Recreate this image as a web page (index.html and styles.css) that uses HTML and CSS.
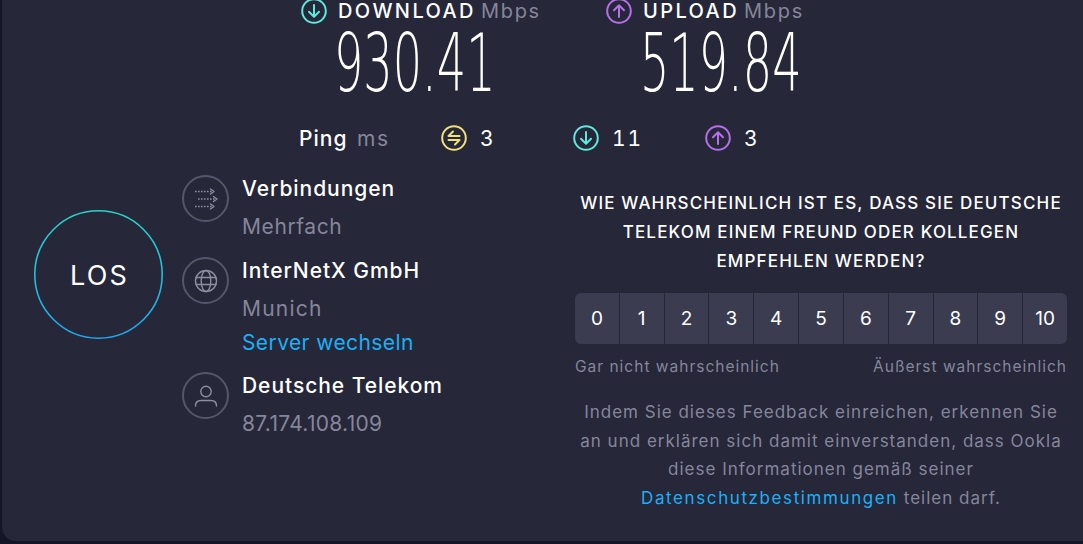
FILE: index.html
```html
<!DOCTYPE html>
<html lang="de">
<head>
<meta charset="utf-8">
<title>Speedtest</title>
<link rel="stylesheet" href="styles.css">
</head>
<body>
<main class="panel">
  <section class="speeds">
    <div class="speed speed-down">
      <div class="speed-label">
        <svg class="icon-lg" viewBox="0 0 26 26"><circle cx="13" cy="13" r="11.8" class="ring-cyan"/><path d="M13 7v11.5M8 13.8l5 5 5-5" class="stroke-cyan"/></svg>
        <span class="label-name">DOWNLOAD</span><span class="label-unit">Mbps</span>
      </div>
      <div class="speed-value"><span>930.41</span></div>
    </div>
    <div class="speed speed-up">
      <div class="speed-label">
        <svg class="icon-lg" viewBox="0 0 26 26"><circle cx="13" cy="13" r="11.8" class="ring-purple"/><path d="M13 19V7.500M8 12.200l5-5 5 5" class="stroke-purple"/></svg>
        <span class="label-name">UPLOAD</span><span class="label-unit">Mbps</span>
      </div>
      <div class="speed-value"><span>519.84</span></div>
    </div>
  </section>

  <section class="ping">
    <span class="ping-name">Ping</span><span class="ping-unit">ms</span>
    <div class="ping-item ping-idle">
      <svg class="icon-lg" viewBox="0 0 26 26"><circle cx="13" cy="13" r="11.8" class="ring-yellow"/><path d="M18.500 11H7.500L12 6.500M7.500 15H18.500L14 19.500" class="stroke-yellow"/></svg>
      <span>3</span>
    </div>
    <div class="ping-item ping-down">
      <svg class="icon-lg" viewBox="0 0 26 26"><circle cx="13" cy="13" r="11.8" class="ring-cyan"/><path d="M13 7v11.500M8 13.800l5 5 5-5" class="stroke-cyan"/></svg>
      <span>11</span>
    </div>
    <div class="ping-item ping-up">
      <svg class="icon-lg" viewBox="0 0 26 26"><circle cx="13" cy="13" r="11.8" class="ring-purple"/><path d="M13 19V7.500M8 12.200l5-5 5 5" class="stroke-purple"/></svg>
      <span>3</span>
    </div>
  </section>

  <section class="lower">
    <div class="go-wrap">
      <svg class="go-ring" viewBox="0 0 129 129">
        <defs><linearGradient id="goGrad" x1="0" y1="0" x2="0" y2="1"><stop offset="0" stop-color="#27d6c4"/><stop offset="1" stop-color="#1fa8ee"/></linearGradient></defs>
        <circle cx="64.500" cy="64.500" r="63.700" fill="none" stroke="url(#goGrad)" stroke-width="1.600"/>
      </svg>
      <span class="go-text">LOS</span>
    </div>

    <div class="info">
      <div class="info-row">
        <div class="info-icon">
          <svg viewBox="0 0 24 24" width="24" height="24"><path d="M1 4.500h17M4 12h17M1 19.500h17" class="stroke-dots"/><path d="M16.500 2l3.500 2.500-3.500 2.500M19.500 9.500L23 12l-3.500 2.500M16.500 17l3.500 2.500-3.500 2.500" class="stroke-grey"/></svg>
        </div>
        <div class="info-text">
          <div class="info-title">Verbindungen</div>
          <div class="info-sub">Mehrfach</div>
        </div>
      </div>
      <div class="info-row info-row-tall">
        <div class="info-icon">
          <svg viewBox="0 0 24 24" width="24" height="24"><circle cx="12" cy="12" r="10.500" class="stroke-grey"/><ellipse cx="12" cy="12" rx="4.800" ry="10.500" class="stroke-grey"/><path d="M2 8.500h20M2 15.500h20" class="stroke-grey"/></svg>
        </div>
        <div class="info-text">
          <div class="info-title">InterNetX GmbH</div>
          <div class="info-sub info-city">Munich</div>
          <a class="info-link" href="#">Server wechseln</a>
        </div>
      </div>
      <div class="info-row">
        <div class="info-icon">
          <svg viewBox="0 0 24 24" width="24" height="24"><circle cx="12" cy="7.500" r="5.200" class="stroke-grey"/><path d="M1.500 22c0-3.800 2.500-5.500 5.500-5.500h10c3 0 5.500 1.700 5.500 5.500" class="stroke-grey"/></svg>
        </div>
        <div class="info-text">
          <div class="info-title">Deutsche Telekom</div>
          <div class="info-sub info-ip">87.174.108.109</div>
        </div>
      </div>
    </div>

    <div class="survey">
      <h2 class="survey-q">WIE WAHRSCHEINLICH IST ES, DASS SIE DEUTSCHE TELEKOM EINEM FREUND ODER KOLLEGEN EMPFEHLEN WERDEN?</h2>
      <div class="scale">
        <button class="scale-btn">0</button><button class="scale-btn">1</button><button class="scale-btn">2</button><button class="scale-btn">3</button><button class="scale-btn">4</button><button class="scale-btn">5</button><button class="scale-btn">6</button><button class="scale-btn">7</button><button class="scale-btn">8</button><button class="scale-btn">9</button><button class="scale-btn">10</button>
      </div>
      <div class="scale-labels"><span>Gar nicht wahrscheinlich</span><span>Äußerst wahrscheinlich</span></div>
      <p class="survey-note">Indem Sie dieses Feedback einreichen, erkennen Sie an und erklären sich damit einverstanden, dass Ookla diese Informationen gemäß seiner <a href="#">Datenschutzbestimmungen</a> teilen darf.</p>
    </div>
  </section>
</main>
</body>
</html>
```

FILE: styles.css
```css
* { box-sizing: border-box; }
html, body { margin: 0; height: 100%; }
body {
  background: #141526;
  font-family: Inter, "Open Sans", sans-serif;
  color: #fff;
  overflow: hidden;
}
.panel {
  width: 1081px;
  height: 541px;
  margin-left: 2px;
  background: #262739;
  border-bottom-left-radius: 14px;
  display: flex;
  flex-direction: column;
}
.icon-lg { width: 26px; height: 26px; flex: none; }
.ring-cyan, .ring-purple, .ring-yellow { fill: none; stroke-width: 2; }
.ring-cyan { stroke: #5fe8dc; }
.ring-purple { stroke: #b570ea; }
.ring-yellow { stroke: #efe27a; }
.stroke-cyan, .stroke-purple, .stroke-yellow { fill: none; stroke-width: 2; stroke-linecap: round; stroke-linejoin: round; }
.stroke-cyan { stroke: #5fe8dc; }
.stroke-purple { stroke: #b570ea; }
.stroke-yellow { stroke: #efe27a; }
.stroke-grey { fill: none; stroke: #8d8e9f; stroke-width: 1.400; stroke-linecap: round; stroke-linejoin: round; }
.stroke-dots { fill: none; stroke: #8d8e9f; stroke-width: 1.400; stroke-dasharray: 1.600 1.400; }

.speeds {
  display: flex;
  height: 103px;
  padding-left: 299px;
  gap: 66px;
}
.speed-down { width: 239px; }
.speed-up { width: 200px; }
.speed-label {
  display: flex;
  align-items: center;
  height: 21px;
  line-height: 20px;
  white-space: nowrap;
}
.label-name { margin-left: 11px; font-size: 20px; font-weight: 500; letter-spacing: 2.400px; }
.label-unit { margin-left: 5px; font-size: 20px; color: #85869a; letter-spacing: 1.700px; }
.speed-value {
  font-family: "DejaVu Sans", sans-serif;
  font-weight: 200;
  font-size: 80px;
  line-height: 80px;
  height: 80px;
  white-space: nowrap;
  margin-top: 3px;
  padding-left: 33px;
}
.speed-up .speed-value { padding-left: 34px; }
.speed-value span {
  display: inline-block;
  transform: scaleX(0.577);
  transform-origin: left center;
}

.ping {
  display: flex;
  align-items: center;
  height: 26px;
  margin-top: 22px;
  padding-left: 297px;
  white-space: nowrap;
  font-size: 21px;
}
.ping-name { font-weight: 500; width: 58px; letter-spacing: 1px; }
.ping-unit { color: #85869a; width: 84px; letter-spacing: 1.500px; }
.ping-item { display: flex; align-items: center; gap: 13px; letter-spacing: 2px; font-variant-numeric: tabular-nums; }
.ping-idle { width: 132px; }
.ping-down { width: 132px; }

.lower {
  display: flex;
  flex: 1;
  align-items: flex-start;
  margin-top: 20px;
}
.go-wrap {
  position: relative;
  width: 129px;
  height: 129px;
  margin: 39px 1px 0 32px;
  flex: none;
  display: flex;
  align-items: center;
  justify-content: center;
}
.go-ring { position: absolute; inset: 0; width: 129px; height: 129px; }
.go-text { font-size: 27px; letter-spacing: 2.200px; margin: 2px 0 0 2px; }

.info { width: 393px; margin-left: 18px; flex: none; display: flex; flex-direction: column; }
.info-row { display: flex; gap: 13px; min-height: 82px; }
.info-row-tall { min-height: 115px; }
.info-icon {
  width: 47px;
  height: 47px;
  margin-top: 4px;
  border: 2px solid #55566a;
  border-radius: 50%;
  display: flex;
  align-items: center;
  justify-content: center;
  flex: none;
}
.info-text { padding-top: 3px; }
.info-title { font-size: 21px; line-height: 30px; font-weight: 500; white-space: nowrap; letter-spacing: 0.950px; }
.info-sub { font-size: 21px; line-height: 30px; margin-top: 8px; color: #85869a; white-space: nowrap; letter-spacing: 0.600px; }
.info-city { letter-spacing: 1.200px; }
.info-ip { letter-spacing: 0.300px; }
.info-link { display: block; font-size: 21px; line-height: 30px; margin-top: 4px; color: #1cb0f6; text-decoration: none; white-space: nowrap; letter-spacing: 0.400px; }

.survey { width: 492px; flex: none; margin-top: 18px; }
.survey-q {
  margin: 0;
  font-size: 17px;
  line-height: 29px;
  font-weight: 500;
  letter-spacing: 1.150px;
  text-align: center;
}
.scale {
  display: flex;
  margin-top: 17px;
  height: 51px;
  border-radius: 6px;
  overflow: hidden;
  gap: 1px;
}
.scale-btn {
  flex: 1;
  border: 0;
  padding: 0;
  background: #3b3c50;
  color: #fff;
  font: 400 19px Inter, sans-serif;
}
.scale-labels {
  display: flex;
  justify-content: space-between;
  margin-top: 13px;
  font-size: 15.500px;
  line-height: 20px;
  color: #85869a;
  white-space: nowrap;
  letter-spacing: 1px;
}
.survey-note {
  margin: 21px 0 0;
  font-size: 17px;
  line-height: 28.500px;
  color: #85869a;
  text-align: center;
  letter-spacing: 1px;
}
.survey-note a { color: #1cb0f6; text-decoration: none; letter-spacing: 1.600px; }
```
